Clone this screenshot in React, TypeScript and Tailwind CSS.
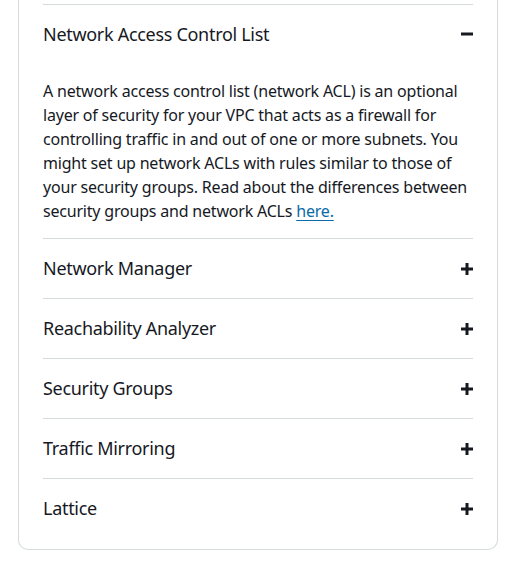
import React from 'react';

const sections = ['Network Manager', 'Reachability Analyzer', 'Security Groups', 'Traffic Mirroring', 'Lattice'];

function PlusIcon() {
  return (
    <svg width="12" height="12" viewBox="0 0 12 12" className="shrink-0">
      <rect x="4.5" y="0" width="3" height="12" fill="#16191f" />
      <rect x="0" y="4.5" width="12" height="3" fill="#16191f" />
    </svg>
  );
}

function MinusIcon() {
  return (
    <svg width="12" height="12" viewBox="0 0 12 12" className="shrink-0">
      <rect x="0" y="4.5" width="12" height="3" fill="#16191f" />
    </svg>
  );
}

export default function App() {
  return (
    <div className="w-[515px] h-[571px] bg-white overflow-hidden" style={{ fontFamily: '"Noto Sans", "Open Sans", sans-serif' }}>
      <div className="ml-[18px] w-[480px] border-x border-b border-[#d5dbdb] rounded-b-[10px] px-6 pt-1 pb-[11px] text-[#16191f]">
        {/* open section */}
        <div className="border-t border-[#d5dbdb]">
          <div className="h-[58px] flex items-center justify-between">
            <span className="text-[18px] tracking-[-0.3px]">Network Access Control List</span>
            <MinusIcon />
          </div>
          <p className="pt-[16px] pb-[15px] text-[16px] leading-6 tracking-[-0.2px]">
            A network access control list (network ACL) is an optional layer of security for your VPC that acts as a firewall for
            controlling traffic in and out of one or more subnets. You might set up network ACLs with rules similar to those of your
            security groups. Read about the differences between security groups and network ACLs{' '}
            <a className="text-[#0b6aa8] underline underline-offset-[3px] decoration-1">here.</a>
          </p>
        </div>
        {sections.map((s) => (
          <div key={s} className="border-t border-[#d5dbdb] h-[60px] flex items-center justify-between">
            <span className="text-[18px] tracking-[-0.3px]">{s}</span>
            <PlusIcon />
          </div>
        ))}
      </div>
    </div>
  );
}
